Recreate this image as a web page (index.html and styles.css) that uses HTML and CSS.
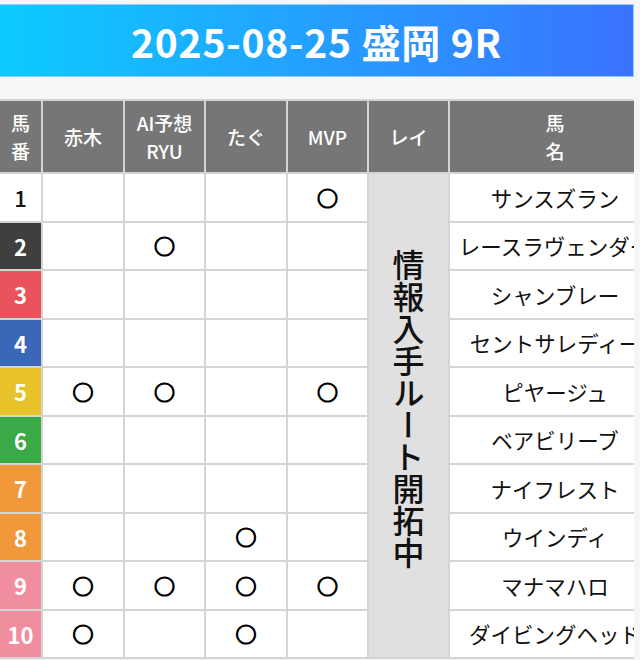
FILE: index.html
```html
<!DOCTYPE html>
<html lang="ja">
<head>
<meta charset="utf-8">
<link rel="stylesheet" href="styles.css">
</head>
<body>
<div class="page">
  <h1 class="banner">2025-08-25 盛岡 9R</h1>
  <div class="table-wrap">
    <table class="race">
      <thead>
        <tr>
          <th class="c-num">馬<br>番</th>
          <th class="c-a">赤木</th>
          <th class="c-b">AI予想<br>RYU</th>
          <th class="c-a">たぐ</th>
          <th class="c-b">MVP</th>
          <th class="c-b">レイ</th>
          <th class="c-name">馬<br>名</th>
        </tr>
      </thead>
      <tbody>
        <tr><td class="num w1">1</td><td></td><td></td><td></td><td class="mark">○</td>
          <td class="rei" rowspan="10"><div class="vtext">情報入手ルート開拓中</div></td>
          <td class="name">サンスズラン</td></tr>
        <tr><td class="num w2">2</td><td></td><td class="mark">○</td><td></td><td></td><td class="name">レースラヴェンダー</td></tr>
        <tr><td class="num w3">3</td><td></td><td></td><td></td><td></td><td class="name">シャンブレー</td></tr>
        <tr><td class="num w4">4</td><td></td><td></td><td></td><td></td><td class="name">セントサレディー</td></tr>
        <tr><td class="num w5">5</td><td class="mark">○</td><td class="mark">○</td><td></td><td class="mark">○</td><td class="name">ピヤージュ</td></tr>
        <tr><td class="num w6">6</td><td></td><td></td><td></td><td></td><td class="name">ベアビリーブ</td></tr>
        <tr><td class="num w7">7</td><td></td><td></td><td></td><td></td><td class="name">ナイフレスト</td></tr>
        <tr><td class="num w7">8</td><td></td><td></td><td class="mark">○</td><td></td><td class="name">ウインディ</td></tr>
        <tr><td class="num w8">9</td><td class="mark">○</td><td class="mark">○</td><td class="mark">○</td><td class="mark">○</td><td class="name">マナマハロ</td></tr>
        <tr><td class="num w8">10</td><td class="mark">○</td><td></td><td class="mark">○</td><td></td><td class="name">ダイビングヘッド</td></tr>
      </tbody>
    </table>
  </div>
</div>
</body>
</html>
```

FILE: styles.css
```css
* { box-sizing: border-box; }
html, body {
  margin: 0;
  padding: 0;
  background: #f6f6f6;
}
body {
  font-family: "Noto Sans CJK JP", "Noto Sans", sans-serif;
  color: #111;
}
.page {
  width: 634px;
  overflow: hidden;
  padding-top: 4px;
}
.banner {
  margin: 0;
  height: 73px;
  display: flex;
  align-items: center;
  justify-content: center;
  color: #fff;
  font-size: 39px;
  font-weight: 700;
  letter-spacing: 0.8px;
  background: linear-gradient(90deg, #0ccbff 0%, #22a4ff 45%, #3a72ff 100%);
  border: 1px solid #8fd0ff;
  border-left: none;
}
.table-wrap {
  margin-top: 22px;
}
.race {
  margin-left: -2px;
  border-collapse: separate;
  border-spacing: 2px;
  background: #d4d4d4;
  table-layout: fixed;
  width: 664px;
}
.race th, .race td {
  padding: 0;
  text-align: center;
  vertical-align: middle;
}
.race th {
  background: #767676;
  color: #fff;
  font-size: 19px;
  font-weight: 500;
  line-height: 28px;
  height: 71px;
}
.c-num { width: 41px; }
.c-a { width: 80px; }
.c-b { width: 79px; }
.c-name { width: 210px; }
.race td {
  background: #fff;
  height: 46.5px;
}
.num {
  color: #fff;
  font-size: 22px;
  font-weight: 700;
}
.race .w1 { color: #111; background: #fff; font-weight: 500; }
.race .w2 { background: #3f3f3f; }
.race .w3 { background: #e9535b; }
.race .w4 { background: #3b67b9; }
.race .w5 { background: #e8c22b; }
.race .w6 { background: #3aa948; }
.race .w7 { background: #f0983a; }
.race .w8 { background: #f08ea0; }
.mark {
  font-size: 21px;
  font-weight: 700;
  line-height: 1;
  -webkit-text-stroke: 1.2px #000;
}
.race .rei {
  background: #e0e0e0;
  vertical-align: middle;
}
.vtext {
  writing-mode: vertical-rl;
  font-size: 32px;
  font-weight: 500;
  line-height: 1;
  margin: 0 auto;
  padding-bottom: 14px;
  color: #111;
}
.name {
  font-size: 21.5px;
  white-space: nowrap;
  overflow: hidden;
}
```
